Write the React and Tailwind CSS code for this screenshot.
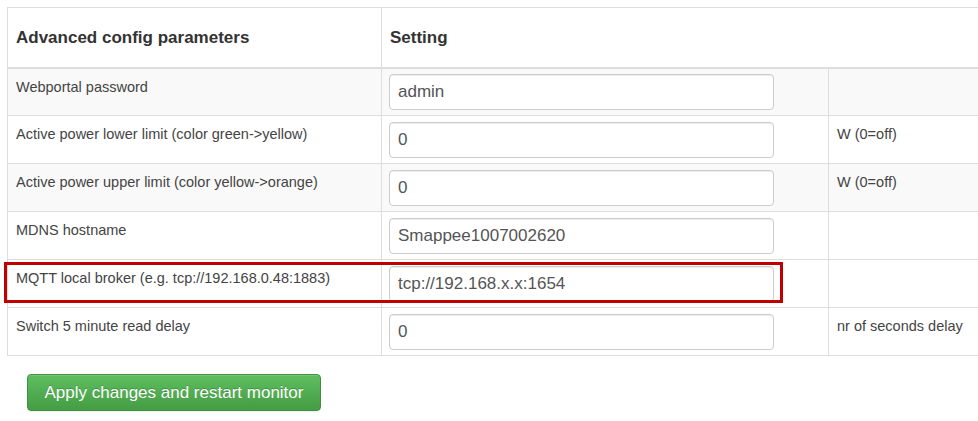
const rows = [
  { label: "Webportal password", value: "admin", unit: "" },
  { label: "Active power lower limit (color green->yellow)", value: "0", unit: "W (0=off)" },
  { label: "Active power upper limit (color yellow->orange)", value: "0", unit: "W (0=off)" },
  { label: "MDNS hostname", value: "Smappee1007002620", unit: "" },
  { label: "MQTT local broker (e.g. tcp://192.168.0.48:1883)", value: "tcp://192.168.x.x:1654", unit: "", plain: true },
  { label: "Switch 5 minute read delay", value: "0", unit: "nr of seconds delay" },
];

export default function App() {
  return (
    <div className="relative w-[978px] h-[421px] overflow-hidden bg-white pt-[7px] pl-[7px] font-['Liberation_Sans',Arial,sans-serif] text-[#333]">
      <table className="border-collapse w-[1000px] table-fixed">
        <colgroup>
          <col className="w-[374px]" />
          <col className="w-[447px]" />
          <col />
        </colgroup>
        <thead>
          <tr className="h-[60px]">
            <th className="border border-[#ddd] border-b-2 px-[8px] text-left align-middle text-[17px] font-bold">
              Advanced config parameters
            </th>
            <th colSpan={2} className="border border-[#ddd] border-b-2 px-[8px] text-left align-middle text-[17px] font-bold">
              Setting
            </th>
          </tr>
        </thead>
        <tbody>
          {rows.map((r, i) => (
            <Row key={r.label} {...r} striped={!r.plain && i % 2 === 0} />
          ))}
        </tbody>
      </table>

      <button className="mt-[18px] ml-[20px] h-[37px] w-[294px] rounded-[4px] border border-[#3e8f3e] bg-gradient-to-b from-[#5fbd5f] to-[#449d44] text-[17px] text-white [text-shadow:0_-1px_0_rgba(0,0,0,0.2)] shadow-[inset_0_1px_0_rgba(255,255,255,0.15),0_1px_1px_rgba(0,0,0,0.075)]">
        Apply changes and restart monitor
      </button>

      {/* highlight around the broker row */}
      <div className="absolute left-[4px] top-[262px] w-[779px] h-[41px] border-[3px] border-[#c00000] pointer-events-none" />
    </div>
  );
}

function Row({ label, value, unit, striped }) {
  return (
    <tr className={`h-[48px] ${striped ? "bg-[#f9f9f9]" : "bg-white"}`}>
      <td className="border border-[#ddd] px-[8px] pt-[8px] align-top text-[14.5px] leading-[20px] text-[#444]">
        {label}
      </td>
      <td className="border border-[#ddd] pl-[7px] py-0 align-middle">
        <input
          readOnly
          value={value}
          className="block h-[36px] w-[385px] rounded-[4px] border border-[#ccc] bg-white pl-[8px] text-[17px] text-[#555] shadow-[inset_0_1px_1px_rgba(0,0,0,0.075)] outline-none font-['Liberation_Sans',Arial,sans-serif]"
        />
      </td>
      <td className="border border-[#ddd] px-[8px] pt-[8px] align-top text-[14.5px] leading-[20px] text-[#444]">
        {unit}
      </td>
    </tr>
  );
}
